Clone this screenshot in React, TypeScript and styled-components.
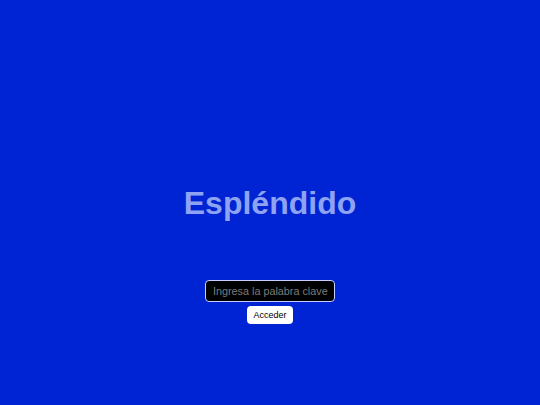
import React from "react";
import styled, { createGlobalStyle } from "styled-components";

const Global = createGlobalStyle`
  html, body { margin: 0; padding: 0; background: #0023d3; }
  body { font-family: "Liberation Sans", Arial, sans-serif; }
`;

const Page = styled.div`
  height: 100vh;
  background: #0023d3;
  display: flex;
  flex-direction: column;
  align-items: center;
  padding-top: 183px;
  box-sizing: border-box;
`;

const Title = styled.h1`
  margin: 0;
  font-size: 32px;
  line-height: 40px;
  font-weight: 700;
  color: #8ea3f2;
`;

const Form = styled.div`
  margin-top: 57px;
  display: flex;
  flex-direction: column;
  align-items: center;
  gap: 4px;
`;

const Input = styled.input`
  width: 130px;
  height: 22px;
  box-sizing: border-box;
  background: #000;
  border: 1px solid #c8d0ff;
  border-radius: 4px;
  padding: 0 1px 0 7px;
  font-family: "Liberation Sans", Arial, sans-serif;
  font-size: 10.8px;
  color: #fff;
  outline: none;
  &::placeholder { color: #7c7c7c; }
`;

const Button = styled.button`
  width: 46px;
  height: 18px;
  box-sizing: border-box;
  background: #fff;
  border: none;
  border-radius: 4px;
  padding: 0;
  font-family: "Liberation Sans", Arial, sans-serif;
  font-size: 9px;
  color: #000;
`;

export default function App() {
  return (
    <>
      <Global />
      <Page>
        <Title>Espléndido</Title>
        <Form>
          <Input placeholder="Ingresa la palabra clave" />
          <Button>Acceder</Button>
        </Form>
      </Page>
    </>
  );
}
